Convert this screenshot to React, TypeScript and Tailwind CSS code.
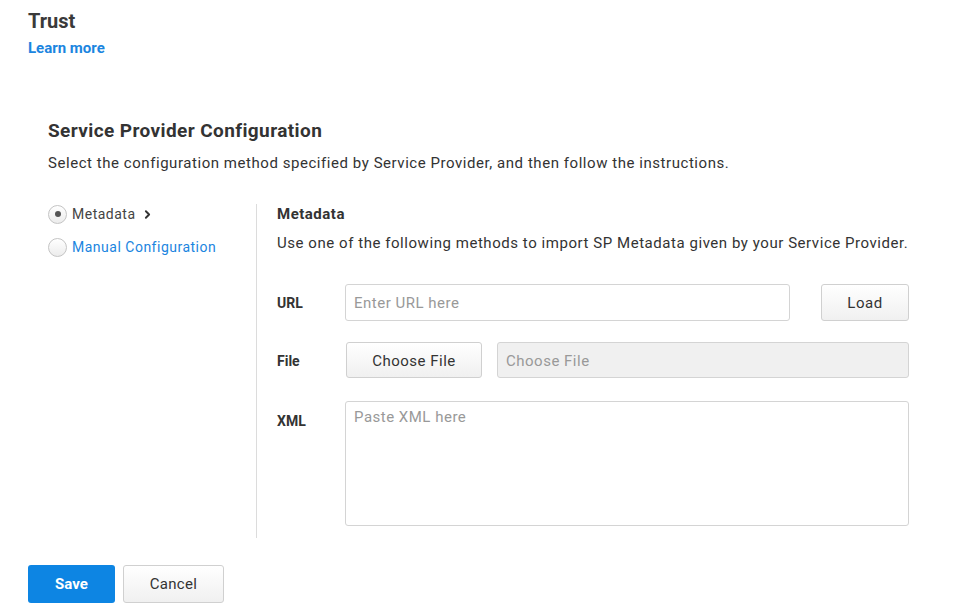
import { ChevronRight } from 'lucide-react'

export default function App() {
  return (
    <div className="min-h-screen bg-white text-[#333] pl-[28px] pt-[9px]" style={{ fontFamily: 'Roboto, "Open Sans", sans-serif' }}>
      {/* Header */}
      <h1 className="text-[20px] leading-[24px] font-bold text-[#3a3a3a]">Trust</h1>
      <a href="#" className="block mt-[5px] text-[15px] leading-[20px] font-bold text-[#1b85e0]">
        Learn more
      </a>

      <div className="pl-[20px] pt-[61px]">
        <h2 className="text-[19px] leading-[24px] font-bold tracking-[0.4px] text-[#333]">Service Provider Configuration</h2>
        <p className="mt-[10px] text-[15px] leading-[20px] tracking-[0.55px] text-[#333] whitespace-nowrap">
          Select the configuration method specified by Service Provider, and then follow the instructions.
        </p>

        <div className="flex mt-[31px]">
          {/* Method list */}
          <div className="w-[208px] flex flex-col gap-[13px]">
            <label className="flex items-center h-[20px] text-[14px] tracking-[0.5px]">
              <span className="w-[19px] h-[19px] rounded-full border border-[#c4c4c4] bg-gradient-to-b from-white to-[#ececec] flex items-center justify-center">
                <span className="w-[6px] h-[6px] rounded-full bg-[#555]" />
              </span>
              <span className="ml-[5px] text-[#444]">Metadata</span>
              <ChevronRight className="ml-[5px] w-[13px] h-[13px] text-[#333]" strokeWidth={3.5} />
            </label>
            <label className="flex items-center h-[20px] text-[14px] tracking-[0.5px]">
              <span className="w-[19px] h-[19px] rounded-full border border-[#c4c4c4] bg-gradient-to-b from-white to-[#ececec]" />
              <span className="ml-[5px] text-[#1b85e0]">Manual Configuration</span>
            </label>
          </div>

          {/* Metadata panel */}
          <div className="border-l border-[#dcdcdc] pl-[20px] pb-[12px] w-[653px]">
            <div className="text-[15px] leading-[20px] font-bold tracking-[0.5px] text-[#333]">Metadata</div>
            <p className="mt-[9px] text-[15px] leading-[20px] tracking-[0.55px] text-[#333] whitespace-nowrap">
              Use one of the following methods to import SP Metadata given by your Service Provider.
            </p>

            <div className="mt-[31px] flex items-center">
              <span className="w-[68px] pt-[2px] text-[14px] font-bold text-[#333]">URL</span>
              <input
                placeholder="Enter URL here"
                className="w-[445px] h-[37px] rounded-[3px] border border-[#d4d4d4] px-[8px] pt-[1px] text-[15px] tracking-[0.5px] placeholder:text-[#999] outline-none"
              />
              <button className="ml-[31px] w-[88px] h-[37px] rounded-[3px] border border-[#d0d0d0] bg-gradient-to-b from-white to-[#f0f0f0] pt-[2px] text-[15px] tracking-[0.5px] text-[#333]">
                Load
              </button>
            </div>

            <div className="mt-[21px] flex items-center">
              <span className="w-[69px] pt-[2px] text-[14px] font-bold text-[#333]">File</span>
              <button className="w-[136px] h-[36px] rounded-[3px] border border-[#d0d0d0] bg-gradient-to-b from-white to-[#f0f0f0] pt-[2px] text-[15px] tracking-[0.5px] text-[#333]">
                Choose File
              </button>
              <input
                disabled
                placeholder="Choose File"
                className="ml-[15px] w-[412px] h-[36px] rounded-[3px] border border-[#d4d4d4] bg-[#f0f0f0] px-[8px] pt-[1px] text-[15px] tracking-[0.5px] placeholder:text-[#999] outline-none"
              />
            </div>

            <div className="mt-[23px] flex items-start">
              <span className="w-[68px] pt-[10px] text-[14px] font-bold text-[#333]">XML</span>
              <textarea
                placeholder="Paste XML here"
                className="w-[564px] h-[125px] rounded-[3px] border border-[#d4d4d4] px-[8px] py-[4px] text-[15px] tracking-[0.5px] placeholder:text-[#999] outline-none resize-none"
              />
            </div>
          </div>
        </div>
      </div>

      {/* Footer */}
      <div className="flex gap-[8px] mt-[27px]">
        <button className="w-[87px] h-[38px] rounded-[3px] bg-[#0d85e3] text-white text-[15px] font-bold">Save</button>
        <button className="w-[101px] h-[38px] rounded-[3px] border border-[#d0d0d0] bg-gradient-to-b from-white to-[#f0f0f0] text-[15px] tracking-[0.3px] text-[#333]">
          Cancel
        </button>
      </div>
    </div>
  )
}
